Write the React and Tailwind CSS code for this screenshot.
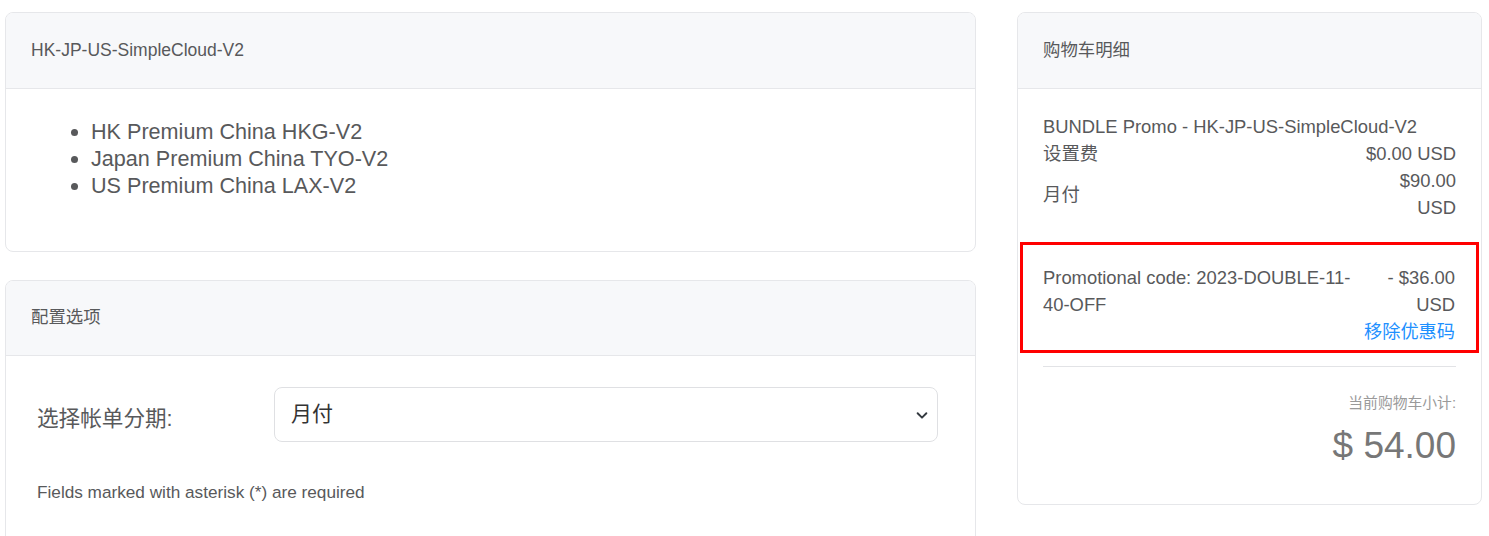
import React from "react";

export default function App() {
  const font = { fontFamily: '"Liberation Sans", Arial, "Noto Sans CJK SC", sans-serif' };
  return (
    <div style={font} className="w-[1489px] h-[536px] overflow-hidden bg-white text-[#58595b] flex gap-[41px] pl-[5px] pt-[12px]">
      <div className="w-[971px] shrink-0 flex flex-col gap-[28px]">
        <div className="shrink-0 border border-[#e6e7ea] rounded-[8px] overflow-hidden h-[240px]">
          <div className="bg-[#f7f8fa] border-b border-[#e6e7ea] h-[76px] flex items-center pl-[25px] text-[17.5px]">
            HK-JP-US-SimpleCloud-V2
          </div>
          <ul className="list-disc pl-[85px] pt-[29px] text-[21.6px] leading-[27px]">
            <li>HK Premium China HKG-V2</li>
            <li>Japan Premium China TYO-V2</li>
            <li>US Premium China LAX-V2</li>
          </ul>
        </div>
        <div className="shrink-0 border border-[#e6e7ea] rounded-[8px] overflow-hidden h-[280px]">
          <div className="bg-[#f7f8fa] border-b border-[#e6e7ea] h-[75px] flex items-center pl-[25px] text-[17.4px]">
            <span className="-mt-[2px]">配置选项</span>
          </div>
          <div className="pt-[31px] pl-[31px] pr-[37px]">
            <div className="flex items-center">
              <div className="w-[237px] text-[21.6px] pt-[10px]">选择帐单分期:</div>
              <div className="flex-1 h-[55px] border border-[#dfe0e3] rounded-[8px] flex items-center justify-between pl-[16px] pr-[8px] text-[21px] text-[#333]">
                <span className="-mt-[2px]">月付</span>
                <svg width="14" height="14" viewBox="0 0 16 16" fill="none" stroke="#343a40" strokeWidth="2.2" strokeLinecap="round" strokeLinejoin="round">
                  <path d="M3 6l5 5 5-5" />
                </svg>
              </div>
            </div>
            <div className="mt-[38px] text-[17.2px]">Fields marked with asterisk (*) are required</div>
          </div>
        </div>
      </div>
      <div className="w-[465px] shrink-0">
        <div className="border border-[#e6e7ea] rounded-[8px] overflow-hidden h-[493px]">
          <div className="bg-[#f7f8fa] border-b border-[#e6e7ea] h-[76px] flex items-center pl-[25px] text-[17.4px]">
            购物车明细
          </div>
          <div className="px-[25px] pt-[24px] text-[18.4px] leading-[27px]">
            <div className="whitespace-nowrap">BUNDLE Promo - HK-JP-US-SimpleCloud-V2</div>
            <div className="flex justify-between">
              <span>设置费</span>
              <span>$0.00 USD</span>
            </div>
            <div className="flex justify-between items-center">
              <span>月付</span>
              <span className="text-right w-[80px]">$90.00 USD</span>
            </div>
          </div>
          <div className="mx-[2px] mt-[21px] border-[3px] border-[#ff0000] h-[111px] pl-[20px] pr-[21px] pt-[19px] text-[18.4px] leading-[27px] flex justify-between">
            <span className="w-[318px]">Promotional code: 2023-DOUBLE-11-40-OFF</span>
            <div className="flex flex-col items-end">
              <span>- $36.00</span>
              <span>USD</span>
              <a className="text-[#1e90ff] text-[18.2px] mt-[1px]">移除优惠码</a>
            </div>
          </div>
          <div className="mx-[25px] mt-[13px] border-t border-[#e2e3e6]"></div>
          <div className="px-[25px] flex flex-col items-end">
            <span className="mt-[25px] text-[14.8px] text-[#9a9a9a]">当前购物车小计:</span>
            <span className="mt-[10px] text-[37px] text-[#777] leading-[44px]">$ 54.00</span>
          </div>
        </div>
      </div>
    </div>
  );
}
